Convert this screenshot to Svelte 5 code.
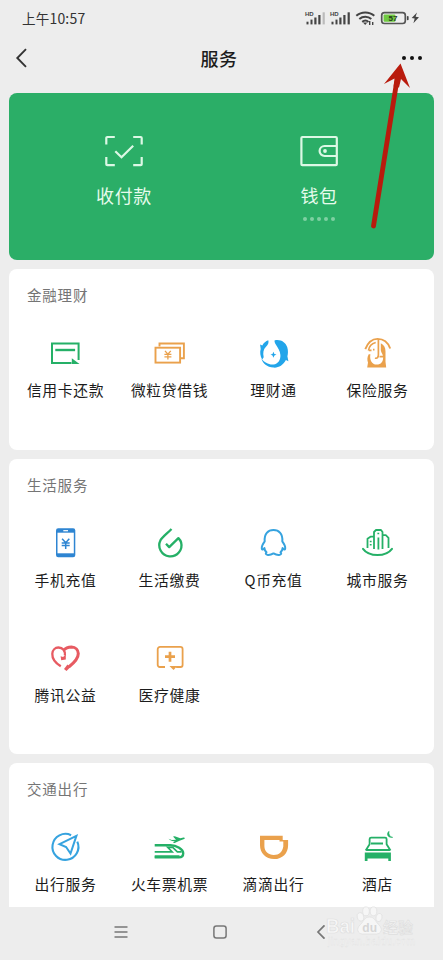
<script>
  const sections = [
    {
      title: '金融理财',
      rows: [[['credit', '信用卡还款'], ['loan', '微粒贷借钱'], ['wealth', '理财通'], ['insure', '保险服务']]]
    },
    {
      title: '生活服务',
      rows: [
        [['phone', '手机充值'], ['utility', '生活缴费'], ['qcoin', 'Q币充值'], ['city', '城市服务']],
        [['charity', '腾讯公益'], ['health', '医疗健康']]
      ]
    },
    {
      title: '交通出行',
      rows: [[['travel', '出行服务'], ['train', '火车票机票'], ['didi', '滴滴出行'], ['hotel', '酒店']]]
    }
  ];
</script>

{#snippet icon(name)}
  <svg class="icon {name}" viewBox="0.5 0 36 36" fill="none" stroke="currentColor" stroke-width="2">
    {#if name === 'credit'}
      <path d="M24 28H4.500V8.500h26.600v16.500" />
      <path d="M7.800 15h19.800" stroke-width="2.400" />
      <path d="M24.300 23.200l7.700 5.700H24.300z" fill="currentColor" stroke="none" />
    {:else if name === 'loan'}
      <path d="M8 11.500V8.500h24.400v14.800h-3" stroke-width="1.900" />
      <rect x="4" y="12.700" width="24.600" height="14.900" stroke-width="1.900" />
      <path d="M13.500 15.800l2.900 3.400 2.900-3.400M12.900 19.400h7M12.900 21.800h7M16.400 19.200v5.300" stroke-width="1.300" />
    {:else if name === 'wealth'}
      <path d="M19 5.400C25 4 29.800 7 31.700 12c1.200 3.500.8 7.500.2 9.300l1 5-2.500-1.200C27.500 30.500 23 33 18 32.600 11.500 32 7.300 28.500 5.800 23.500c3 3.800 7.500 6.500 12.200 6 4.500-.5 7.200-4.500 6.900-9.500-.3-4.500-2.500-7-4.600-10.500-.9-1.500-1.300-3-1.300-4.100z" fill="currentColor" stroke="none" />
      <path d="M12.800 5.300c.7 2.700-.3 4.500-2.300 6.500-2.600 2.600-3.300 6-2.300 10.500l-1.500 2.300C4.700 21.500 4.200 17 5.200 14L4.600 9.400l2.200 1c1.500-2.500 3.400-4.400 6-5.100z" fill="currentColor" stroke="none" />
      <path d="M15 19.500l2-.6.900-2.200 1 2.200 2.100.6-2.100.9-1 2.300-.9-2.300z" fill="currentColor" stroke="none" />
    {:else if name === 'insure'}
      <path d="M5.800 14.200C8.500 7.200 12.500 3.900 18 3.900s10.400 3.200 12.700 9.600" stroke-width="1.900" />
      <path d="M9 15.500c.6-4.200 3.300-7 7.200-8" stroke-width="1.700" />
      <path d="M18.900 4v15.500c0 3-1.300 4.300-3.400 3.500" stroke-width="1.700" />
      <path d="M21.300 8.300c3.300 1.500 4.700 4.500 4.700 8.200v10.200l.7 5.800H7.700l.8-5c-.9-2.400-1-5.300.7-8.300h1.700c-1 5.500 1.300 10.400 6.300 10.400 4.300 0 6.600-3 6.400-7.400-.1-3.600-2.300-4.700-2.300-7.500z" fill="currentColor" stroke="none" />
      <path d="M9.300 15.300h2.700M13.500 14.700h1.500M20 21.700h3.500" stroke-width="1.700" />
    {:else if name === 'phone'}
      <rect x="8.500" y="3.300" width="19.300" height="29" rx="2.200" fill="currentColor" stroke="none" />
      <rect x="10" y="7.700" width="16.300" height="20.600" fill="#fff" stroke="none" />
      <path d="M15.800 5.700h4.700" stroke="#fff" stroke-width="1.200" />
      <path d="M14.600 13.700l3.600 4 3.600-4M14.200 17.900h8M14.200 20.500h8M18.200 17.700v6.200" stroke-width="1.500" />
    {:else if name === 'utility'}
      <path d="M20 4C15.500 8.600 11.500 11.300 9 15.200a11.100 11.100 0 1 0 20.600 2.200c-.5-1.900-1.400-3-2.700-4.300l-9.200 9-3.200-3.400" stroke-width="2.300" stroke-linejoin="round" />
    {:else if name === 'qcoin'}
      <path d="M9.200 16.300C8.600 8.800 12.500 5.100 18 5.100s9.400 3.700 8.800 11.200c1.600 2.200 3.100 5 2.900 7-.2 1.900-1.500 1.500-2.600-.2 0 1.700-.9 3-2.100 4.100 1.300 1.100.9 2.500-1.400 2.700-2.500.2-3.900-.5-5.600-1.500-1.700 1-3.100 1.700-5.600 1.500-2.300-.2-2.700-1.600-1.400-2.700-1.200-1.100-2.100-2.400-2.100-4.100-1.100 1.700-2.400 2.100-2.600.2-.2-2 1.300-4.800 2.900-7z" stroke-width="2" stroke-linejoin="round" />
    {:else if name === 'city'}
      <path d="M3.500 23.800c3 4.100 8.300 6.200 14.500 6.200s11.500-2.100 14.500-6.200" stroke-linecap="round" />
      <path d="M8 23v-9.300l3-2h3.500V24M14.500 12.500V7l2-2h5l1.500 2v17M18.900 12.500V24.500M23.500 10.200h2.800l2.700 2.600V23M11.200 15.800v1.500M11.200 19v1.500M18.800 7.700v1.500" stroke-width="1.800" stroke-linejoin="round" />
    {:else if name === 'charity'}
      <path d="M13.300 27.300C8 24 4.600 19.500 4.800 14.700c.2-3.700 2.800-6.200 6.100-6.200 4.600 0 6.900 3.600 6.500 7.800" stroke-width="2.300" />
      <path d="M18.300 15.300v5.200l-4.600.7-.6-3.900 2.500.7z" fill="currentColor" stroke="none" />
      <path d="M16.300 11.200C18.200 8.700 21 8 24 8c4.200.1 6.700 2.900 6.800 6.500.1 5.300-4.300 9.400-9.500 13.500" stroke-width="3" />
      <path d="M20 25.500l2.700 2.700-3.700 3.900-2.500-2.200z" fill="currentColor" stroke="none" />
    {:else if name === 'health'}
      <path d="M13.500 28H8.200a2 2 0 0 1-2-2V10.200a2.300 2.300 0 0 1 2.300-2.300h20.300a2.300 2.300 0 0 1 2.300 2.300V26a2 2 0 0 1-2 2h-4.500" stroke-width="1.800" />
      <path d="M18 27h7.700l-3.600 4-2.400-2.200z" fill="currentColor" stroke="none" />
      <path d="M18.500 12.700v10M13.500 17.700h10" stroke-width="2.700" />
    {:else if name === 'travel'}
      <path d="M23.600 6.200A13 13 0 1 0 29.800 12.600" stroke-width="2.100" />
      <path d="M28.900 6.900L12 15.200l6.600 2.800 4.400 6.500z" stroke-width="2" />
    {:else if name === 'train'}
      <path d="M3.200 16.200H19c6 0 12.700 4 12.700 8 0 2.800-1.700 4.200-4.300 4.200H3.200" stroke-width="2.400" />
      <path d="M3.200 22.900h17.500l-4.500-4.500h5l4.700 4.500H30" stroke-width="1.600" />
      <path d="M3.200 27.500H28" stroke-width="2.500" />
      <path d="M17 9.800l3.300 1.300 4.200-.3-3-3.300 1.800-.3 5.500 2.100 3.200-.7c1.400-.2 1.800 1 .7 1.500l-4.700 1.700-4.800 2.100h-1.800l1.900-1.700c-2.500.3-4.500-.5-6.300-2.400z" fill="currentColor" stroke="none" />
    {:else if name === 'didi'}
      <path d="M4.500 6.800h22.700v4.100h5.400v5.300c0 8-5.600 13.900-14 13.900S4.500 24 4.500 16.200zM8.900 11v6.200c0 5 4 8.700 9.400 8.700 5.300 0 8.800-3.300 9.500-8.500V12.600H24V11z" fill="currentColor" fill-rule="evenodd" stroke="none" />
    {:else}
      <path d="M6.200 21.500l3.900-6.300V10a1.500 1.500 0 0 1 1.500-1.400h14a1.500 1.500 0 0 1 1.500 1.400v5.200l3.900 6.300M11.500 14.500h12M6.200 21h24.600" stroke-width="1.800" stroke-linejoin="round" />
      <path d="M5.300 23.500h26.100V32h-2.600v-2.400H8V32H5.300z" fill="currentColor" stroke="none" />
      <path d="M29.600 2.200c-3.100 2-1.800 7 3.700 6.200-3-.7-4.400-3-3.700-6.200z" fill="currentColor" stroke-width=".5" />
    {/if}
  </svg>
{/snippet}

<main>
  <div class="status">
    <span class="time">上午<b>10:57</b></span>
    <svg width="118" height="20" viewBox="302 8 118 20" fill="#444">
      {#each [305, 330] as x, i}
        <text {x} y="16" class="hd">HD</text>
        <rect x={x + 1.500} y="21.700" width="2" height="2.700" />
        <rect x={x + 5.500} y="19.600" width="2" height="4.800" />
        <rect x={x + 9.300} y="17.500" width="2.200" height="6.900" />
        <rect x={x + 13.300} y="15" width="2.200" height="9.400" />
        <rect x={x + 17.600} y="12.300" width="2.200" height="12.100" fill={i ? '#444' : '#bbb'} />
      {/each}
      <g fill="none" stroke="#444" stroke-width="2">
        <path d="M356.300 15.800c5-4.500 13-4.500 18 0M359.300 19c3.500-3 8.700-3 12 0M362.200 21.900c2-1.600 4.500-1.600 6.300 0" />
        <path d="M369.700 21v4M372.700 22v3" stroke-width="1.400" />
      </g>
      <path d="M363 22.500h4.300l-2.100 2.500z" />
      <rect x="381.700" y="12.700" width="23.600" height="10.800" rx="2.700" fill="#eee" stroke="#555" stroke-width="1.700" />
      <rect x="383.600" y="14.500" width="11.800" height="7.200" rx="1" fill="#70ca42" />
      <rect x="406.900" y="16" width="1.700" height="4.200" rx=".8" />
      <text x="388.600" y="21.100" class="percent">57</text>
      <path d="M417 12.500l-5.300 5.500 3 .5-1.300 4.800 5.600-6-3.400-.6z" />
    </svg>
  </div>

  <header>
    <svg width="14" height="22" viewBox="0 0 14 22" fill="none" stroke="#333" stroke-width="1.900"><path d="M11 2.200L2.300 11l8.700 8.800" /></svg>
    <h1>服务</h1>
    <svg width="22" height="6" viewBox="0 0 22 6" fill="#111"><circle cx="3" cy="3" r="2" /><circle cx="11" cy="3" r="2" /><circle cx="19" cy="3" r="2" /></svg>
  </header>

  <section class="pay">
    <div class="entry">
      <svg width="40" height="32" viewBox="0 0 40 32" fill="none" stroke="#dcf8e5" stroke-width="2.200">
        <path d="M2.300 9.500V3a1 1 0 0 1 1-1h7.500M29.200 2h7.500a1 1 0 0 1 1 1v6.500M37.700 22v7.200a1 1 0 0 1-1 1h-7.500M10.800 30.200H3.300a1 1 0 0 1-1-1V22M11.300 16.300l6.200 6 11.700-11.500" />
      </svg>
      <span>收付款</span>
    </div>
    <div class="entry">
      <svg width="40" height="32" viewBox="0 0 40 32" fill="none" stroke="#dcf8e5" stroke-width="2.200">
        <rect x="2.400" y="2" width="35.400" height="28.200" rx="1" />
        <path d="M37.800 11H25.600a5 5 0 0 0 0 10h12.200" />
        <circle cx="26" cy="16" r="1.900" fill="#dcf8e5" stroke="none" />
      </svg>
      <span>钱包</span>
      <div class="stars">{#each Array(5) as _}<i></i>{/each}</div>
    </div>
  </section>

  {#each sections as section}
    <section class="card">
      <h2>{section.title}</h2>
      {#each section.rows as row}
        <div class="row">
          {#each row as [name, label]}
            <div class="item">{@render icon(name)}<span>{label}</span></div>
          {/each}
        </div>
      {/each}
    </section>
  {/each}

  <nav>
    <svg width="14" height="14" viewBox="0 0 14 14" stroke="#777" stroke-width="1.500"><path d="M.5 2h13M.5 7h13M.5 12h13" /></svg>
    <svg width="14" height="14" viewBox="0 0 14 14" fill="none" stroke="#777" stroke-width="1.500"><rect x=".9" y="1" width="12.200" height="12" rx="2.500" /></svg>
    <svg width="14" height="14" viewBox="0 0 14 14" fill="none" stroke="#777" stroke-width="1.700"><path d="M11.500.3L5 7l6.500 6.700" /></svg>
  </nav>

  <svg class="arrow" width="44" height="172" viewBox="370 60 44 172">
    <path d="M373.500 226L396.500 83" stroke="#b91b0d" stroke-width="4.800" stroke-linecap="round" />
    <path d="M400.500 63.500L384 84l10.500-5.500-.9 8 5.400 1 2-8.500 9 9z" fill="#b91b0d" />
  </svg>

  <svg class="mark" width="104" height="46" viewBox="322 904 104 46">
    <g fill="#fafafa" stroke="#dadada" stroke-width=".7">
      <text x="326" y="933" class="bai" textLength="29" lengthAdjust="spacingAndGlyphs">Bai</text>
      <ellipse cx="360.500" cy="917" rx="3.200" ry="4.200" transform="rotate(-15 360 917)" />
      <ellipse cx="366" cy="911.300" rx="3.300" ry="4.500" />
      <ellipse cx="373.500" cy="911.300" rx="3.300" ry="4.500" />
      <ellipse cx="379" cy="917.500" rx="3" ry="4.200" transform="rotate(15 379 917.500)" />
      <path d="M369.500 917c-5 0-5.500 4-9 7.500-5 4.500-2.500 9.500 2 9.500h14c4.500 0 7-5 2-9.500-3.500-3.500-4-7.500-9-7.500z" />
      <text x="383" y="933" class="jing" textLength="30">经验</text>
    </g>
    <text x="362.300" y="932" class="du">du</text>
    <text x="328" y="945" class="url" textLength="87">jingyan.baidu.com</text>
  </svg>
</main>

<style>
  :global(body) { margin: 0; background: #ededed; }
  main {
    position: relative;
    box-sizing: border-box;
    width: 443px;
    height: 960px;
    overflow: hidden;
    display: flex;
    flex-direction: column;
    background: #ededed;
    color: #1c1c1c;
    font-family: "Noto Sans CJK SC", sans-serif;
  }
  svg { display: block; flex: none; }
  .status {
    height: 36px;
    padding: 0 23px 0 22px;
    display: flex;
    align-items: center;
    justify-content: space-between;
  }
  .time { font-size: 13.500px; letter-spacing: .2px; color: #333; }
  .time b { font-weight: 400; font-size: 14px; }
  .hd { font: bold 6px "Liberation Sans", sans-serif; }
  .percent { font: bold 8px "Liberation Sans", sans-serif; fill: #263b1b; }
  header {
    height: 44px;
    padding: 0 20px 0 15px;
    display: grid;
    grid-template-columns: 22px 1fr 22px;
    align-items: center;
    text-align: center;
  }
  h1 { margin: 0; font-size: 18px; font-weight: 500; line-height: 26px; letter-spacing: .5px; padding-bottom: 1px; }
  .pay {
    box-sizing: border-box;
    height: 166.500px;
    margin: 13.300px 9px 9.200px;
    padding: 42px 17.500px 0;
    border-radius: 8px;
    background: #2bae67;
    display: grid;
    grid-template-columns: 1fr 1fr;
  }
  .entry { display: flex; flex-direction: column; align-items: center; color: #e6fbec; }
  .entry span { margin-top: 14px; font-size: 18px; line-height: 28px; letter-spacing: .6px; }
  .stars { display: flex; gap: 3px; margin-top: 8px; }
  .stars i { width: 4px; height: 4px; border-radius: 50%; background: #7fd0a2; }
  .card {
    box-sizing: border-box;
    flex: none;
    height: 181px;
    margin: 0 9px 9px;
    padding: 15.500px 4.500px 0;
    border-radius: 8px;
    background: #fff;
  }
  .card:nth-of-type(3) { height: 295px; }
  .card:nth-of-type(4) { height: 144px; margin-bottom: 0; border-radius: 8px 8px 0 0; }
  h2 { margin: 0 0 0 13.500px; height: 22px; font-size: 14.500px; line-height: 22px; font-weight: 400; letter-spacing: .8px; color: #757575; }
  .row { display: grid; grid-template-columns: repeat(4, 104px); height: 86px; padding-top: 28.500px; }
  .item { display: flex; flex-direction: column; align-items: center; }
  .item span { margin-top: 7.300px; font-size: 14.800px; line-height: 24px; letter-spacing: .65px; white-space: nowrap; }
  .icon { width: 36px; height: 36px; color: #25b067; }
  .loan, .insure, .health, .didi { color: #eaa14c; }
  .wealth { color: #22a5ea; }
  .phone { color: #2e85d2; }
  .qcoin, .travel { color: #36a3df; }
  .charity { color: #e75b62; }
  nav {
    flex: 1;
    padding: 0 116px 2px 113.500px;
    display: flex;
    align-items: center;
    justify-content: space-between;
  }
  .arrow { position: absolute; left: 370px; top: 60px; }
  .mark { position: absolute; left: 322px; top: 904px; opacity: .75; }
  .bai { font: bold 20px "Liberation Sans", sans-serif; }
  .jing { font: 500 15px "Noto Sans CJK SC", sans-serif; }
  .du { font: bold 12px "Liberation Sans", sans-serif; fill: #cfcfcf; }
  .url { font: 10px "Liberation Sans", sans-serif; fill: #fafafa; stroke: #dcdcdc; stroke-width: .3px; }
</style>
